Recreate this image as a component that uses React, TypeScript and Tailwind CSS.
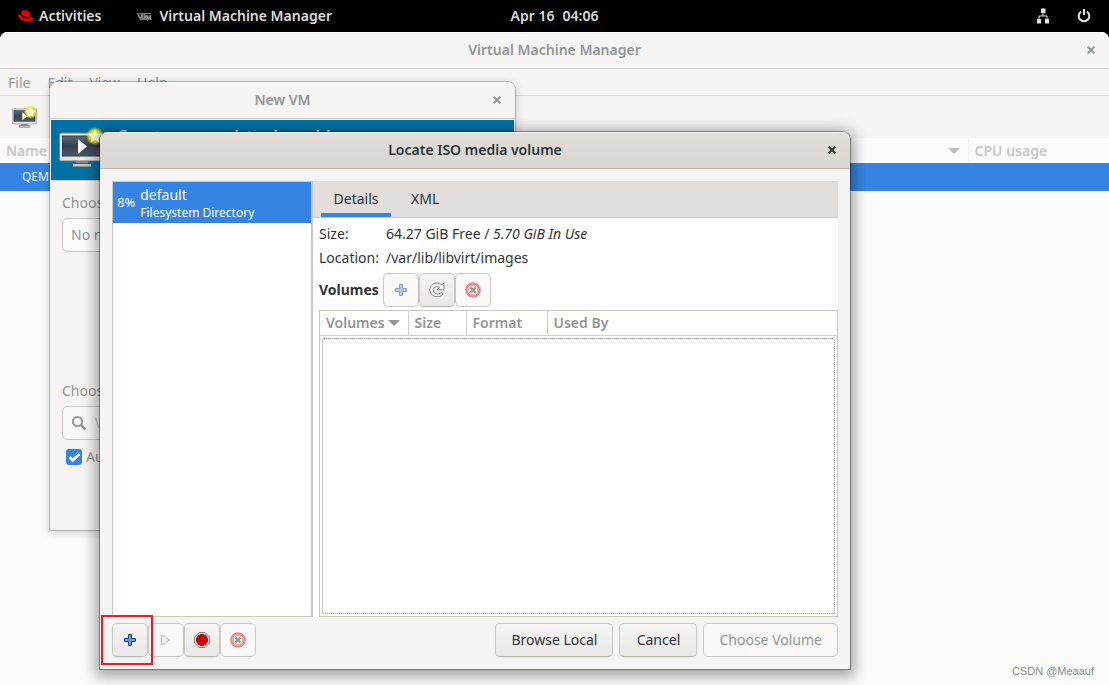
import type { ReactNode } from 'react';

function CloseIcon({ className }: { className?: string }) {
  return (
    <svg viewBox="0 0 8 8" className={`h-2 w-2 ${className ?? ''}`} aria-hidden="true">
      <path d="M0.7 0.7 L7.3 7.3 M7.3 0.7 L0.7 7.3" stroke="currentColor" strokeWidth="2" fill="none" />
    </svg>
  );
}

function RedHatIcon() {
  return (
    <svg viewBox="0 0 15 12" className="h-3 w-[15px]" aria-hidden="true">
      <path
        fill="#ee0000"
        d="M10 6.9c1 0 2.4-.2 2.4-1.4l-.8-2.9c-.1-.6-.3-.9-1.3-1.4C9.500.8 7.9.2 7.400.2c-.4 0-.6.600-1.100.6C5.800.8 5.400.3 4.900.3c-.5 0-.8.4-1.100 1.100L3 3.800C3 4.700 6.300 6.900 10 6.900zM12.500 5.900c.1.600.1.700.1.800 0 1.200-1.300 1.800-3 1.800C5.700 8.500 2.400 6.300 2.400 4.800c0-.2 0-.4.1-.6C1.100 4.300 0 4.600 0 5.700 0 7.700 4.500 11.500 10.200 11.500c4.200 0 4.800-1.600 4.800-2.800 0-1-.9-2.100-2.500-2.800z"
      />
    </svg>
  );
}

function VmLogo() {
  return (
    <svg viewBox="0 0 15 9" className="h-[9px] w-[15px]" fill="none" aria-hidden="true">
      <path d="M0.500 1.500L3.500 7L5.500 1.500V7H7.500V3L10 7V3L12 7L13.500 3V8" stroke="#8b8b8b" strokeWidth="1.500" />
      <path d="M0 1.500H14.500M4 7.500H14.500" stroke="#777" strokeWidth="1.200" />
    </svg>
  );
}

function NetworkIcon() {
  return (
    <svg viewBox="0 0 14 16" className="h-4 w-3.5" aria-hidden="true">
      <path d="M5 0.500h4.500v4.500H5zM1 11h4v4.500H1zM9 11h4v4.500H9z" fill="#e3e3e3" />
      <path d="M7 5v3M3 11V8h8v3" stroke="#e3e3e3" fill="none" />
    </svg>
  );
}

function PowerIcon() {
  return (
    <svg viewBox="0 0 14 16" className="h-4 w-3.5" fill="none" stroke="#e3e3e3" strokeWidth="2" aria-hidden="true">
      <path d="M4 3.600A5.300 5.300 0 1 0 10 3.600" />
      <path d="M7 1v6" />
    </svg>
  );
}

function MonitorIcon({ id, className, starX, starY, starR }: { id: string; className: string; starX: number; starY: number; starR: number }) {
  return (
    <svg viewBox="0 0 48 44" className={className} aria-hidden="true">
      <defs>
        <linearGradient id={`${id}-screen`} x1="0" y1="0" x2="0" y2="1">
          <stop offset="0" stopColor="#5c6878" />
          <stop offset="0.500" stopColor="#36404f" />
          <stop offset="1" stopColor="#4c586a" />
        </linearGradient>
        <radialGradient id={`${id}-glow`}>
          <stop offset="0.400" stopColor="#f6f400" />
          <stop offset="0.700" stopColor="#e9e800" stopOpacity="0.850" />
          <stop offset="1" stopColor="#d8e000" stopOpacity="0" />
        </radialGradient>
      </defs>
      <path d="M17 34h12v4H17z" fill="#8c8f8a" />
      <rect x="13.500" y="37.500" width="19" height="3.500" rx="1" fill="#c9cac7" stroke="#555" />
      <rect x="0.500" y="7" width="45" height="28" rx="1.500" fill="#e8e8e6" stroke="#777a75" />
      <rect x="3.500" y="10" width="39" height="20" fill={`url(#${id}-screen)`} stroke="#333b47" />
      <path d="M19 13v15l9-7.500z" fill="#fff" />
      <g transform={`translate(${starX} ${starY}) scale(${starR})`}>
        <circle r="9" fill={`url(#${id}-glow)`} />
        <path d="M0-7l2.100 4.500 4.900.6-3.600 3.400.9 4.900L0 4l-4.300 2.400.9-4.900L-7-1.900l4.900-.6z" fill="#fffff0" />
      </g>
    </svg>
  );
}

function PlusIcon({ faded = false }: { faded?: boolean }) {
  return (
    <svg viewBox="0 0 12 12" className={`h-3 w-3 ${faded ? 'opacity-50' : ''}`} aria-hidden="true">
      <path d="M4.500.5h3v4h4v3h-4v4h-3v-4h-4v-3h4z" fill="#6a9bd4" stroke="#204a87" strokeLinejoin="round" />
    </svg>
  );
}

function PlayIcon() {
  return (
    <svg viewBox="0 0 12 12" className="h-3 w-3" aria-hidden="true">
      <path d="M1.500 1v10l8.500-5z" fill="#ededeb" stroke="#c3c4c1" strokeLinejoin="round" />
    </svg>
  );
}

function StopIcon() {
  return (
    <svg viewBox="0 0 16 16" className="h-4 w-4" aria-hidden="true">
      <path d="M5 .6h6L15.400 5v6L11 15.400H5L.6 11V5z" fill="#eeeeec" stroke="#6f726d" />
      <circle cx="8" cy="8" r="5.500" fill="#cc0000" stroke="#a00000" />
    </svg>
  );
}

function DeleteIcon() {
  return (
    <svg viewBox="0 0 16 16" className="h-4 w-4" aria-hidden="true">
      <circle cx="8" cy="8" r="6.600" fill="#f5f3f1" stroke="#ee8787" strokeWidth="2.500" />
      <circle cx="8" cy="8" r="4.700" fill="none" stroke="#e9a5a5" />
      <path d="M5.500 5.500l5 5m0-5l-5 5" stroke="#969894" strokeWidth="2.200" />
    </svg>
  );
}

function RefreshIcon() {
  return (
    <svg viewBox="0 0 16 16" className="h-4 w-4" fill="none" aria-hidden="true">
      <path
        d="M15 .8v7H8.200l2.300-2.300C8.300 3.800 5 4.600 4.300 7.500c-.8 4 4.500 6.300 8 2.900l1.700 1.700C9 17.300.8 14 .8 7.900.8 1.500 8.400-1.200 12.800 3z"
        fill="#f7f7f6"
        stroke="#81837f"
        strokeLinejoin="round"
      />
    </svg>
  );
}

function SortArrow({ className }: { className: string }) {
  return (
    <svg viewBox="0 0 12 6" className={`h-1.5 w-3 ${className}`} aria-hidden="true">
      <path d="M0 0h12L6 6z" fill="currentColor" />
    </svg>
  );
}

const raised =
  'border-[#cdc7c2] border-b-[#bfb8b1] bg-linear-to-b from-[#f6f5f4] to-[#eae8e6] text-[#2e3436] shadow-[0_1px_2px_rgba(0,0,0,0.08)]';
const flat = 'border-[#cdc7c2] bg-[#faf9f8] text-[#929595]';

function IconButton({ label, disabled = false, children }: { label: string; disabled?: boolean; children: ReactNode }) {
  return (
    <button
      type="button"
      aria-label={label}
      disabled={disabled}
      className={`flex h-[34px] w-9 items-center justify-center rounded-[5px] border ${disabled ? flat : raised}`}
    >
      {children}
    </button>
  );
}

function TextButton({ disabled = false, children }: { disabled?: boolean; children: ReactNode }) {
  return (
    <button
      type="button"
      disabled={disabled}
      className={`h-[34px] min-w-[78px] rounded-[5px] border px-[15px] ${disabled ? flat : raised}`}
    >
      {children}
    </button>
  );
}

function TopBar() {
  return (
    <header className="grid h-8 shrink-0 grid-cols-[1fr_auto_1fr] items-center bg-black pr-[18px] pl-[18px] font-semibold text-[#dedede]">
      <div className="flex items-center">
        <button type="button" className="flex items-center gap-1.5">
          <RedHatIcon />
          Activities
        </button>
        <button type="button" className="ml-9 flex items-center gap-[7px]">
          <VmLogo />
          Virtual Machine Manager
        </button>
      </div>
      <time className="flex gap-2">
        <span>Apr 16</span>
        <span>04:06</span>
      </time>
      <div className="flex items-center justify-end gap-[27px]">
        <NetworkIcon />
        <PowerIcon />
      </div>
    </header>
  );
}

function TitleBar({ title, active = false }: { title: string; active?: boolean }) {
  return (
    <div
      className={`grid h-[37px] shrink-0 grid-cols-[1fr_auto_1fr] items-center rounded-t-lg border-b px-3.5 font-semibold ${
        active
          ? 'border-[#bfb8b1] bg-linear-to-b from-[#e1dedb] to-[#dad6d2] text-[#2e3436] shadow-[inset_0_1px_0_#f5f4f2]'
          : 'border-[#d5d0cc] bg-[#f6f5f4] text-[#929595] shadow-[inset_0_1px_0_#ffffff]'
      }`}
    >
      <span />
      <h2>{title}</h2>
      <button type="button" aria-label={`Close ${title}`} className="justify-self-end">
        <CloseIcon />
      </button>
    </div>
  );
}

function ManagerWindow() {
  return (
    <main className="flex flex-1 flex-col rounded-t-lg bg-[#fcfcfc] text-[#929595]">
      <TitleBar title="Virtual Machine Manager" />
      <nav className="flex h-[27px] shrink-0 items-center gap-[17px] border-b border-[#dcdad8] bg-[#f6f5f4] px-2 pt-0.5">
        {['File', 'Edit', 'View', 'Help'].map((item) => (
          <button key={item} type="button">
            {item}
          </button>
        ))}
      </nav>
      <div className="flex h-[42px] shrink-0 items-center bg-[#f6f5f4] px-3">
        <button type="button" aria-label="Create a new virtual machine">
          <MonitorIcon id="toolbar" className="h-6 w-[26px]" starX={34} starY={13} starR={1.4} />
        </button>
      </div>
      <table className="w-full table-fixed border-collapse text-left">
        <colgroup>
          <col />
          <col className="w-[141px]" />
        </colgroup>
        <thead>
          <tr className="h-[25px] text-[#c5c6c6]">
            <th className="border-r border-[#f2f2f1] p-0 pr-2 pl-1.5 font-semibold">
              <span className="flex items-center justify-between">
                Name
                <SortArrow className="text-[#bcbebe]" />
              </span>
            </th>
            <th className="p-0 pl-1.5 font-semibold">CPU usage</th>
          </tr>
        </thead>
        <tbody>
          <tr className="h-7 bg-[#3584e4] text-xs text-white/90">
            <td className="p-0 pl-[22px]">QEMU/KVM</td>
            <td className="p-0" />
          </tr>
        </tbody>
      </table>
    </main>
  );
}

function NewVmWindow() {
  return (
    <section className="absolute top-[82px] left-[50px] flex h-[448px] w-[465px] flex-col rounded-t-lg bg-[#f6f5f4] text-[#929595] shadow-[0_0_0_1px_rgba(0,0,0,0.22),0_2px_8px_2px_rgba(0,0,0,0.14)]">
      <TitleBar title="New VM" />
      <div className="mx-px mt-px flex h-[61px] shrink-0 items-start gap-2.5 border-b border-[#d5d0cc] bg-[#0071a6] pl-2">
        <MonitorIcon id="banner" className="mt-1.5 h-11 w-12 shrink-0" starX={36} starY={10} starR={1} />
        <h3 className="pt-1 text-base font-bold text-white/80">Create a new virtual machine</h3>
      </div>
      <form className="flex flex-col px-3 pt-3">
        <label htmlFor="media" className="leading-5">
          Choose ISO or CDROM install media:
        </label>
        <select
          id="media"
          className="mt-[5px] h-[34px] w-full appearance-none rounded-[5px] border border-[#cdc7c2] bg-[#fcfcfc] px-2"
        >
          <option>No media selected</option>
        </select>
        <label htmlFor="os" className="mt-[129px] leading-5">
          Choose the operating system you are installing:
        </label>
        <div className="mt-[5px] flex h-[34px] items-center gap-2 rounded-[5px] border border-[#cdc7c2] bg-[#faf9f8] px-2">
          <svg viewBox="0 0 16 16" className="h-4 w-4 shrink-0" fill="none" stroke="#929595" aria-hidden="true">
            <circle cx="6.500" cy="6.500" r="4.600" strokeWidth="2" />
            <path d="M10 10l4.500 4.500" strokeWidth="2.500" />
          </svg>
          <input id="os" disabled placeholder="Waiting for install media" className="min-w-0 flex-1 placeholder:text-[#c5c6c6]" />
        </div>
        <label className="mt-[7px] ml-1 flex items-center gap-1 leading-5">
          <span className="grid h-4 w-4 place-items-center">
            <input type="checkbox" defaultChecked className="col-start-1 row-start-1 h-4 w-4 appearance-none rounded-[3px] checked:bg-[#3584e4]" />
            <svg viewBox="0 0 16 16" className="pointer-events-none col-start-1 row-start-1 h-4 w-4" fill="none" aria-hidden="true">
              <path d="M3.500 8l3.300 3.200L13.500 5" stroke="#fff" strokeWidth="2.800" />
            </svg>
          </span>
          Automatically detect from the installation media
        </label>
      </form>
    </section>
  );
}

function PoolList() {
  return (
    <div className="w-[201px] shrink-0 border border-r-2 border-[#cdc7c2] bg-white">
      <button type="button" className="flex h-[41px] w-full items-center gap-[5px] bg-[#3584e4] pl-1 text-left text-white">
        <span className="text-[13px]">8%</span>
        <span className="flex flex-col pt-0.5">
          <span className="leading-[18px]">default</span>
          <span className="text-xs leading-[18px]">Filesystem Directory</span>
        </span>
      </button>
    </div>
  );
}

function DetailsPane() {
  return (
    <div className="flex min-w-0 flex-1 flex-col bg-white">
      <div role="tablist" className="flex h-[37px] shrink-0 gap-2 border-b border-[#cdc7c2] bg-[#e1dedb] pl-2">
        <button type="button" role="tab" aria-selected="true" className="min-w-[70px] border-b-4 border-[#3584e4] px-3 pt-1">
          Details
        </button>
        <button type="button" role="tab" aria-selected="false" className="border-b-4 border-transparent px-3 pt-1">
          XML
        </button>
      </div>
      <div className="flex flex-1 flex-col pt-1 pl-1.5">
        <dl className="grid grid-cols-[67px_1fr] leading-6">
          <dt>Size:</dt>
          <dd>
            64.27 GiB Free / <em>5.70 GiB In Use</em>
          </dd>
          <dt>Location:</dt>
          <dd>/var/lib/libvirt/images</dd>
        </dl>
        <div className="mt-[3px] flex items-center gap-1">
          <h3 className="font-bold">Volumes</h3>
          <div className="flex">
            <IconButton label="New volume" disabled>
              <PlusIcon faded />
            </IconButton>
            <IconButton label="Refresh volumes">
              <RefreshIcon />
            </IconButton>
            <IconButton label="Delete volume" disabled>
              <DeleteIcon />
            </IconButton>
          </div>
        </div>
        <div className="mt-[3px] flex flex-1 flex-col border border-[#cdc7c2]">
          <table className="w-full table-fixed border-collapse text-left text-[#929595]">
            <colgroup>
              <col className="w-[88px]" />
              <col className="w-[58px]" />
              <col className="w-[81px]" />
              <col />
            </colgroup>
            <thead>
              <tr className="h-6 border-b border-[#d5d0cc]">
                <th className="border-r border-[#d5d0cc] p-0 pl-1.5 font-semibold">
                  <span className="flex items-center gap-[3px]">
                    Volumes
                    <SortArrow className="text-[#929595]" />
                  </span>
                </th>
                <th className="border-r border-[#d5d0cc] p-0 pl-1.5 font-semibold">Size</th>
                <th className="border-r border-[#d5d0cc] p-0 pl-1.5 font-semibold">Format</th>
                <th className="p-0 pl-1.5 font-semibold">Used By</th>
              </tr>
            </thead>
          </table>
          <div className="m-0.5 flex-1 rounded-xs border border-dotted border-[#888b8b]" />
        </div>
      </div>
    </div>
  );
}

function LocateDialog() {
  return (
    <section
      role="dialog"
      aria-label="Locate ISO media volume"
      className="absolute top-[132px] left-[100px] flex h-[537px] w-[750px] flex-col rounded-t-lg bg-[#f6f5f4] text-[#2e3436] shadow-[0_0_0_1px_rgba(0,0,0,0.35),0_3px_14px_5px_rgba(0,0,0,0.34)]"
    >
      <TitleBar title="Locate ISO media volume" active />
      <div className="flex flex-1 flex-col gap-1.5 p-3">
        <div className="flex flex-1">
          <PoolList />
          <DetailsPane />
        </div>
        <div className="flex items-center justify-between">
          <div className="flex">
            <IconButton label="Add pool">
              <PlusIcon />
            </IconButton>
            <IconButton label="Start pool" disabled>
              <PlayIcon />
            </IconButton>
            <IconButton label="Stop pool">
              <StopIcon />
            </IconButton>
            <IconButton label="Delete pool" disabled>
              <DeleteIcon />
            </IconButton>
          </div>
          <div className="flex gap-1.5">
            <TextButton>Browse Local</TextButton>
            <TextButton>Cancel</TextButton>
            <TextButton disabled>Choose Volume</TextButton>
          </div>
        </div>
      </div>
    </section>
  );
}

export default function App() {
  return (
    <div className="relative flex min-h-screen flex-col overflow-hidden bg-black font-['Noto_Sans',sans-serif] text-sm whitespace-nowrap">
      <TopBar />
      <ManagerWindow />
      <NewVmWindow />
      <LocateDialog />
      <div className="pointer-events-none absolute top-[615px] left-[101px] h-[50px] w-[52px] border-2 border-[#ed1c24]" />
      <p className="absolute right-[15px] bottom-1.5 font-['Liberation_Sans',sans-serif] text-[11px] leading-4 text-[#8a8a8a]">CSDN @Meaauf</p>
    </div>
  );
}
